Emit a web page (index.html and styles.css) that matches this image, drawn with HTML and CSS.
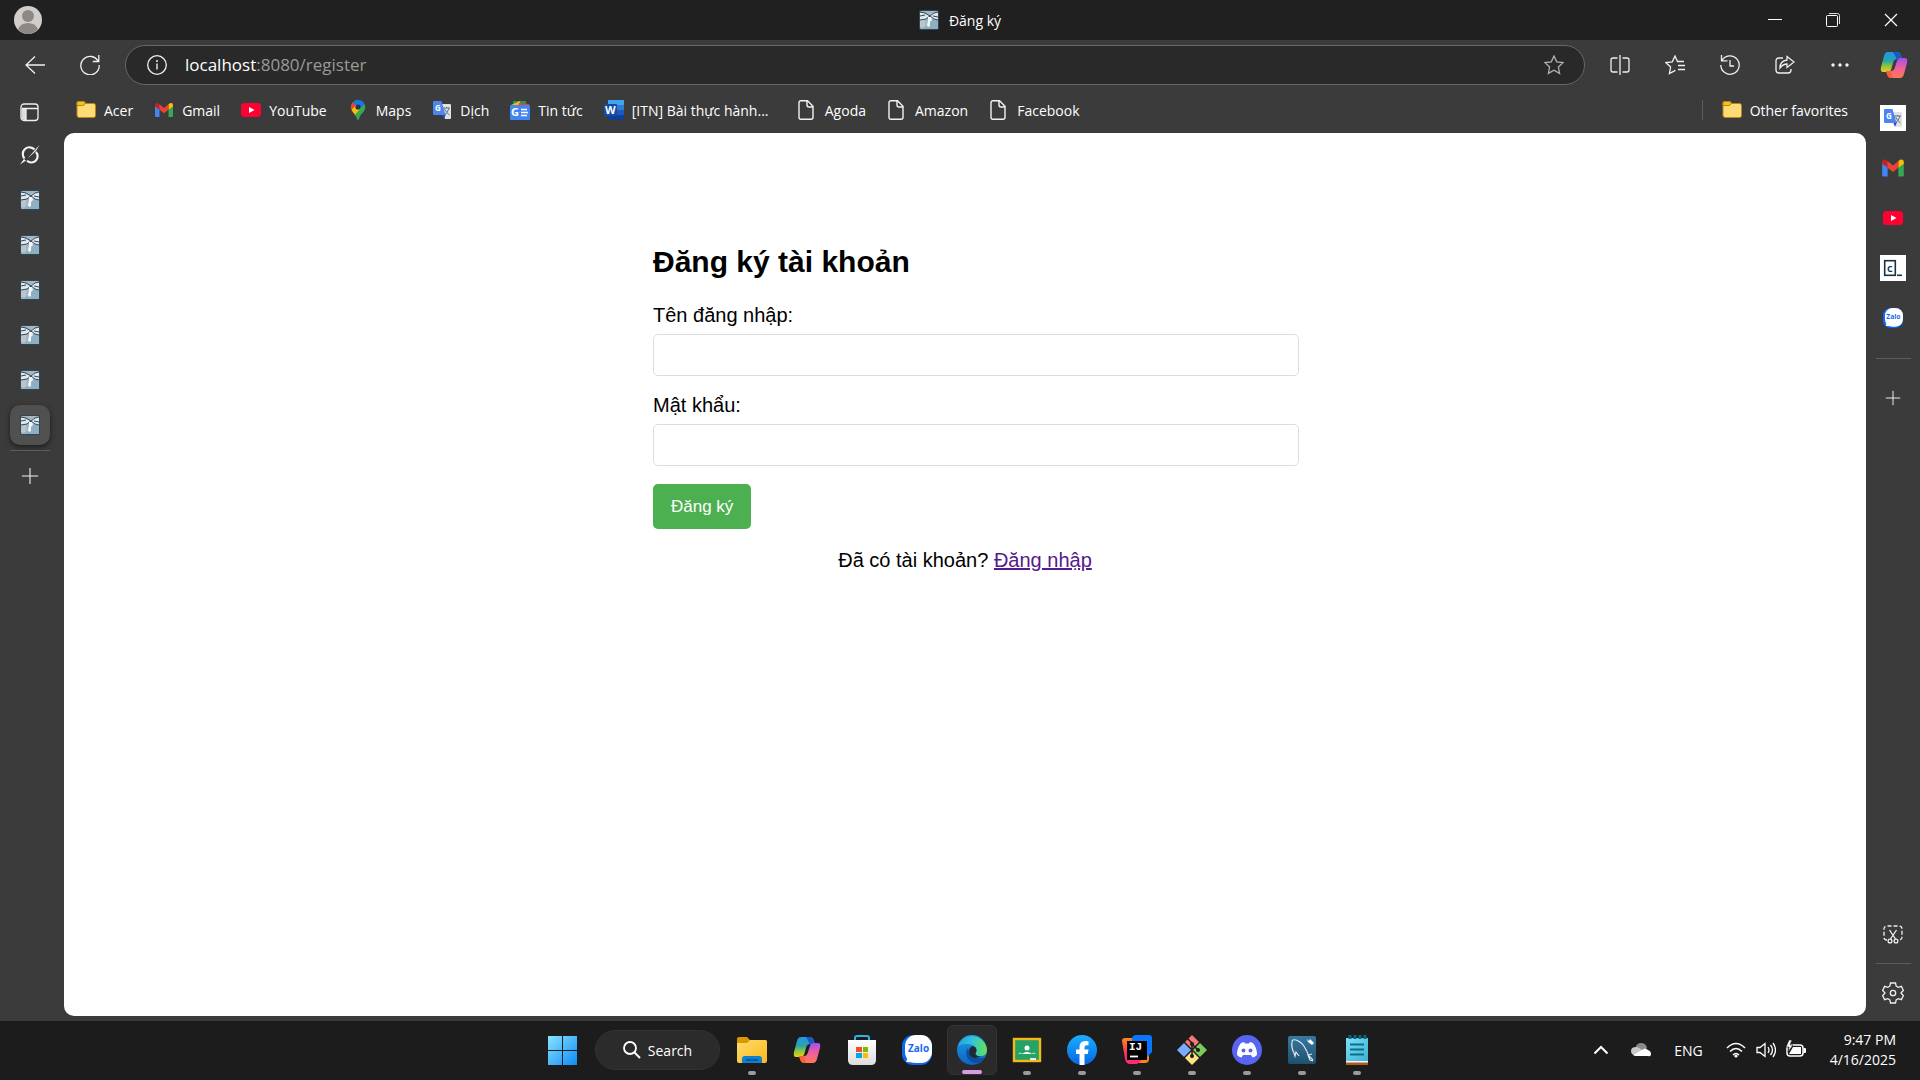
FILE: index.html
```html
<!DOCTYPE html>
<html lang="vi">
<head>
<meta charset="utf-8">
<title>Đăng ký</title>
<link rel="stylesheet" href="styles.css">
</head>
<body>
<svg class="defs" aria-hidden="true">
  <defs>
    <linearGradient id="cpA" x1="0" y1="0" x2="0" y2="1"><stop offset="0" stop-color="#2196e8"/><stop offset=".45" stop-color="#2aa5a8"/><stop offset=".7" stop-color="#8cc63c"/><stop offset="1" stop-color="#f5c917"/></linearGradient>
    <linearGradient id="cpB" x1="0" y1="0" x2="0" y2="1"><stop offset="0" stop-color="#a14ff0"/><stop offset=".5" stop-color="#ef5f9c"/><stop offset="1" stop-color="#ff7a4d"/></linearGradient>
    <linearGradient id="win" x1="0" y1="0" x2="1" y2="1"><stop offset="0" stop-color="#8be3ff"/><stop offset="1" stop-color="#0a8cf5"/></linearGradient>
    <linearGradient id="fold" x1="0" y1="0" x2="1" y2="1"><stop offset="0" stop-color="#ffdc6b"/><stop offset="1" stop-color="#fbb81c"/></linearGradient>
    <linearGradient id="edgeTop" x1="0" y1="0" x2="1" y2="0"><stop offset="0" stop-color="#24a4dc"/><stop offset=".5" stop-color="#33c3d8"/><stop offset="1" stop-color="#67e24e"/></linearGradient>
    <linearGradient id="edgeLow" x1="0" y1="0" x2="0" y2="1"><stop offset="0" stop-color="#1b9de2"/><stop offset="1" stop-color="#0b63c5"/></linearGradient>
    <linearGradient id="fbk" x1="0" y1="0" x2="0" y2="1"><stop offset="0" stop-color="#1aafff"/><stop offset="1" stop-color="#0866e0"/></linearGradient>
    <linearGradient id="ijA" x1="0" y1="0" x2="0" y2="1"><stop offset="0" stop-color="#ff8a1c"/><stop offset=".6" stop-color="#ff2a5c"/><stop offset="1" stop-color="#ff2a7a"/></linearGradient>
    <linearGradient id="sqlg" x1="0" y1="0" x2="0" y2="1"><stop offset="0" stop-color="#39799f"/><stop offset="1" stop-color="#1f5070"/></linearGradient>
    <linearGradient id="note" x1="0" y1="0" x2="1" y2="1"><stop offset="0" stop-color="#7fe0f8"/><stop offset="1" stop-color="#3bb0d2"/></linearGradient>
    <linearGradient id="bag" x1="0" y1="0" x2="0" y2="1"><stop offset="0" stop-color="#fff"/><stop offset="1" stop-color="#dcdcdc"/></linearGradient>
  </defs>
  <symbol id="favicon" viewBox="0 0 20 20">
    <rect width="20" height="20" rx="2" fill="#2f4656"/><rect x="1" y="1" width="18" height="18" rx="1" fill="#a3b8c4"/>
    <path d="M11 9h8v10H5v-3h6z" fill="#8fb0c2"/><path d="M1 10h5v7H1z" fill="#bcc4cc"/>
    <path d="M1 3l4 0 5 3-3 3-6 1zM19 2l-5 1-4 3 4 3 5 1z" fill="#dfe8ef"/>
    <path d="M1 2l5 1 5 3 4-3 4-1M1 6l5-1M1 10l6-1 4-3 4 3 4 1M14 6l5 1" fill="none" stroke="#364753"/>
    <path d="M9 7h3l1 3-2 2v4l-2 1-1-2 1-4z" fill="#f2f7fb"/>
  </symbol>
  <symbol id="folder" viewBox="0 0 20 20">
    <path d="M1 3q0-1.500 1.500-1.500h5q1.500 0 2 2h8q2 0 2 2v10q0 2-2 2h-14q-2.500 0-2.500-2z" fill="#ffdb78" stroke="#b58713" /><path d="M1 5V3q0-1.500 1.500-1.500h5q1.500 0 1.500 2-1 2-2 2H1" fill="#f6c21c" stroke="#b58713"/>
  </symbol>
  <symbol id="gmail" viewBox="0 0 20 20">
    <path d="M1 5h4.500v12H2q-1 0-1-1z" fill="#4285f4"/><path d="M14.500 5H19v11q0 1-1 1h-3.500z" fill="#34a853"/><path d="M1 5q0-2 2-2 1 0 2.500 1.200v5.500L1 6.500z" fill="#c5221f"/><path d="M19 5q0-2-2-2-1 0-2.500 1.200v5.500L19 6.500z" fill="#fbbc04"/><path d="M5.500 4.200L10 8l4.500-3.800v5.500L10 13.300 5.500 9.700z" fill="#ea4335"/>
  </symbol>
  <symbol id="youtube" viewBox="0 0 20 20"><rect y="3" width="20" height="14" rx="3.500" fill="#ff0033"/><path d="M8 7l5.500 3L8 13z" fill="#fff"/></symbol>
  <symbol id="maps" viewBox="0 0 20 20">
    <path d="M10 0a7 7 0 0 1 7 7c0 5-4.500 6-6 12q-1 2-2 0C8 13 3 12 3 7a7 7 0 0 1 7-7z" fill="#34a853"/><path d="M10 0a7 7 0 0 1 6.500 4.500L10 10 4.500 3A7 7 0 0 1 10 0z" fill="#1a73e8"/><path d="M4.800 2.500L8 5.500 3.500 10Q1.500 6 4.800 2.500z" fill="#ea4335"/><path d="M3.500 10L8 5l5 3-6 7q-2-3-3.500-5z" fill="#fbbc04"/><path d="M16.500 4.500q2 4-2 8L8 17l-1-2z" fill="#34a853"/><circle cx="10" cy="7" r="2.600" fill="#2b3350"/>
  </symbol>
  <symbol id="page" viewBox="0 0 20 20"><path d="M4 .8h6.500l5.500 5.500v11q0 2-2 2H4q-2 0-2-2v-14.500q0-2 2-2zM10 1v4q0 2 2 2h4" fill="none" stroke="#f2f2f2" stroke-width="1.400"/></symbol>
  <symbol id="copilot" viewBox="0 0 28 28">
    <path d="M8 1h9q3 0 4 4l1 3h-5q-3 0-4 4l-2 7q-1 2-4 2H3q-3 0-2-5L4 5q1-4 4-4z" fill="url(#cpA)"/><path d="M16 1q4 0 5 4l1 4h-5q-2-5-4-8z" fill="#1b58c9"/><path d="M20 27h-9q-3 0-4-4l-1-3h5q3 0 4-4l2-6q1-3 4-3h4q3 0 2 5l-3 11q-1 4-4 4z" fill="url(#cpB)"/><path d="M12 27q-4 0-5-4l-1-3h5q1 6 3 7z" fill="#f5613a"/>
  </symbol>
  <symbol id="plus" viewBox="0 0 20 20"><path d="M10 1v18M1 10h18" stroke="#f2f2f2" stroke-width="1.200"/></symbol>
</svg>

<div class="desktop">
  <header class="titlebar">
    <button class="avatar" aria-label="Profile"><svg viewBox="0 0 28 28"><circle cx="14" cy="14" r="14" fill="#d0cdca"/><circle cx="14" cy="10" r="6" fill="#8c8885"/><path d="M4 23q3-6 10-6t10 6q-4 5-10 5T4 23z" fill="#8c8885"/></svg></button>
    <div class="tab-title"><svg class="i20"><use href="#favicon"/></svg><span>Đăng ký</span></div>
    <div class="window-buttons">
      <button aria-label="Minimize"><svg viewBox="0 0 14 14"><path d="M0 6.500h14" stroke="#fff"/></svg></button>
      <button aria-label="Restore"><svg viewBox="0 0 14 14"><rect x=".5" y="2.500" width="11" height="11" rx="1" fill="none" stroke="#fff"/><path d="M3 .5h8.500q2 0 2 2V11" fill="none" stroke="#ddd"/></svg></button>
      <button aria-label="Close"><svg viewBox="0 0 14 14"><path d="M1 1l12 12M13 1L1 13" stroke="#fff" stroke-width="1.200"/></svg></button>
    </div>
  </header>

  <div class="toolbar">
    <div class="nav">
      <button aria-label="Back"><svg viewBox="0 0 20 20"><path d="M10 1.500L1 10l9 8.500M1 10h19" class="line"/></svg></button>
      <button aria-label="Refresh"><svg viewBox="0 0 20 20"><path d="M18.500 7A9.200 9.200 0 1 0 19.200 10M18.800 0v6.500h-6" class="line"/></svg></button>
    </div>
    <div class="address">
      <svg class="i20" viewBox="0 0 20 20"><circle cx="10" cy="10" r="9.300" class="line"/><path d="M10 8.500v6" stroke="#eee" stroke-width="1.400"/><circle cx="10" cy="6" r="1" fill="#eee"/></svg>
      <div class="url"><b>localhost</b>:8080/register</div>
      <button aria-label="Add to favorites"><svg viewBox="0 0 20 20"><path d="M10 1l2.700 5.800 6.300.8-4.600 4.400 1.200 6.400L10 15.200l-5.600 3.200L5.600 12 1 7.600l6.300-.8z" class="line dim"/></svg></button>
    </div>
    <div class="tools">
      <button aria-label="Split screen"><svg viewBox="0 0 20 20"><path d="M7.500 3H3Q1 3 1 5v10q0 2 2 2h4.500M12.500 3H17q2 0 2 2v10q0 2-2 2h-4.500M10 0v20" class="line"/></svg></button>
      <button aria-label="Favorites"><svg viewBox="0 0 20 20"><path d="M19 6.500h-6.500L10 1 7.300 6.800.8 7.600 5.600 12l-1.200 6.600 6-3.200M13 10.500h7M13 14.500h7" class="line"/></svg></button>
      <button aria-label="History"><svg viewBox="0 0 20 20"><path d="M2 5.500A9.200 9.200 0 1 1 .8 10M1.500 0v5.800h6M10 5v6h4" class="line"/></svg></button>
      <button aria-label="Share"><svg viewBox="0 0 20 20"><path d="M8 3H4Q1 3 1 6v9q0 3 3 3h9q3 0 3-3v-1M12 1.500L19 7l-7 5.500V9Q8 9 5 13q0-7 7-8z" class="line"/></svg></button>
      <button aria-label="Settings and more"><svg viewBox="0 0 20 20" fill="#f2f2f2"><circle cx="3" cy="10" r="1.700"/><circle cx="10" cy="10" r="1.700"/><circle cx="17" cy="10" r="1.700"/></svg></button>
      <button class="assistant" aria-label="Copilot"><svg class="i28"><use href="#copilot"/></svg></button>
    </div>
  </div>

  <div class="browser">
    <nav class="tabs">
      <button class="tab-menu" aria-label="Tab actions"><svg class="i20" viewBox="0 0 20 20"><rect x="1" y="2" width="17" height="16.500" rx="3" class="line"/><path d="M1.500 7H6v11H4q-2.500 0-2.500-2z" fill="#ddd"/><path d="M6 7v11M2 6.500h16" class="line"/></svg></button>
      <button aria-label="Grok"><svg class="i20" viewBox="0 0 20 20"><path d="M14.500 4.500A6.300 6.300 0 0 0 4.500 13.500M7 15.800A6.300 6.300 0 0 0 16 7" fill="none" stroke="#f4f4f4" stroke-width="2.200"/><path d="M0 19.500L4 14l2 1.500zM19.500 0L16 6 7.500 13.500z" fill="#f4f4f4"/></svg></button>
      <button aria-label="Tab"><svg class="i20"><use href="#favicon"/></svg></button>
      <button aria-label="Tab"><svg class="i20"><use href="#favicon"/></svg></button>
      <button aria-label="Tab"><svg class="i20"><use href="#favicon"/></svg></button>
      <button aria-label="Tab"><svg class="i20"><use href="#favicon"/></svg></button>
      <button aria-label="Tab"><svg class="i20"><use href="#favicon"/></svg></button>
      <button class="active" aria-label="Đăng ký"><svg class="i20"><use href="#favicon"/></svg></button>
      <hr>
      <button aria-label="New tab"><svg class="i18"><use href="#plus"/></svg></button>
    </nav>

    <div class="content">
      <nav class="bookmarks">
        <a href="#"><svg class="i20"><use href="#folder"/></svg>Acer</a>
        <a href="#"><svg class="i20"><use href="#gmail"/></svg>Gmail</a>
        <a href="#"><svg class="i20"><use href="#youtube"/></svg>YouTube</a>
        <a href="#"><svg class="i20"><use href="#maps"/></svg>Maps</a>
        <a href="#"><svg class="i20" viewBox="0 0 20 20"><path d="M9 4h9q1 0 1 1v13q0 1-1 1h-5z" fill="#dfe3e6"/><path d="M11 8h7M14.500 7v1M17 8q-1 5-5 7M12.500 9q2 4 5 6" stroke="#61717b" fill="none"/><path d="M10 14h4l-2 5z" fill="#3b3fc4"/><path d="M2 1h7.500l4 14H2q-1 0-1-1V2q0-1 1-1z" fill="#4a86f0"/><text x="3" y="11" class="g" font-size="8" fill="#fff">G</text></svg>Dịch</a>
        <a href="#"><svg class="i20" viewBox="0 0 20 20"><path d="M3 1h13v6H3z" fill="#1e9b4c"/><path d="M1 5l9-4v6H1z" fill="#fbbc04"/><path d="M9 3l10 1v3H8z" fill="#ea4335"/><rect y="5" width="20" height="15" rx="1" fill="#4285f4"/><text x="1" y="16" class="g" font-size="11" fill="#fff">G</text><path d="M11 9.500h6M11 12.500h7M11 15.500h6" stroke="#fff" stroke-width="1.500"/></svg>Tin tức</a>
        <a href="#" class="wide"><svg class="i20" viewBox="0 0 20 20"><path d="M4 0h16v5H4z" fill="#41a5ee"/><path d="M4 5h16v5H4z" fill="#2b7cd3"/><path d="M4 10h16v5H4z" fill="#185abd"/><path d="M4 15h16v5H4z" fill="#103f91"/><rect y="4" width="13" height="12" rx="1" fill="#134ca6"/><text x="1" y="14" class="g" font-size="11" fill="#fff">W</text></svg>[ITN] Bài thực hành...</a>
        <a href="#"><svg class="i20"><use href="#page"/></svg>Agoda</a>
        <a href="#"><svg class="i20"><use href="#page"/></svg>Amazon</a>
        <a href="#"><svg class="i20"><use href="#page"/></svg>Facebook</a>
        <a href="#" class="other"><svg class="i20"><use href="#folder"/></svg>Other favorites</a>
      </nav>
      <main class="page">
        <div class="container">
          <h2>Đăng ký tài khoản</h2>
          <form>
            <div class="form-group"><label for="username">Tên đăng nhập:</label><input type="text" id="username"></div>
            <div class="form-group"><label for="password">Mật khẩu:</label><input type="password" id="password"></div>
            <button type="submit" class="submit">Đăng ký</button>
          </form>
          <p>Đã có tài khoản? <a href="#">Đăng nhập</a></p>
        </div>
      </main>
    </div>

    <aside class="sidebar">
      <button class="tile" aria-label="Translate"><svg class="i20" viewBox="0 0 20 20"><path d="M9 4h9q1 0 1 1v13q0 1-1 1h-5z" fill="#dfe3e6"/><path d="M11 8h7M14.500 7v1M17 8q-1 5-5 7M12.500 9q2 4 5 6" stroke="#61717b" fill="none"/><path d="M10 14h4l-2 5z" fill="#3b3fc4"/><path d="M2 1h7.500l4 14H2q-1 0-1-1V2q0-1 1-1z" fill="#4a86f0"/><text x="3" y="11" class="g" font-size="8" fill="#fff">G</text></svg></button>
      <button aria-label="Gmail"><svg class="i24"><use href="#gmail"/></svg></button>
      <button aria-label="YouTube"><svg class="i20"><use href="#youtube"/></svg></button>
      <button class="tile" aria-label="Codecademy"><svg class="i26" viewBox="0 0 26 26"><rect x="4.700" y="5.700" width="10.600" height="14.600" fill="none" stroke="#163247" stroke-width="1.600"/><text x="7" y="17" class="g" font-size="9" fill="#163247">C</text><path d="M17 20.300h5" stroke="#163247" stroke-width="1.600"/></svg></button>
      <button aria-label="Zalo"><svg class="i20" viewBox="0 0 30 30"><rect width="30" height="30" rx="11" fill="#0a68f5"/><rect x="3" width="27" height="28" rx="11" fill="#fff"/><path d="M4 20q2 4 0 7l9 .5z" fill="#fff"/><text x="5" y="17" class="g" font-size="10" fill="#1768f2">Zalo</text></svg></button>
      <hr>
      <button aria-label="Customize"><svg class="i16"><use href="#plus"/></svg></button>
      <span class="spacer"></span>
      <button aria-label="Screenshot"><svg class="i20" viewBox="0 0 20 20"><path d="M4 16q-3 0-3-3V5q0-3 3-3h12q3 0 3 3v8q0 3-3 3" class="line" stroke-dasharray="4 2"/><path d="M6.500 6l6 9M13.500 6l-6 9" class="line"/><circle cx="7" cy="17" r="1.900" class="line"/><circle cx="13" cy="17" r="1.900" class="line"/></svg></button>
      <hr>
      <button class="settings" aria-label="Settings"><svg class="i22" viewBox="0 0 22 22"><path d="M8.500 1h5l.7 3.200 2 1.200 3.200-1 2 4-2.300 2.300v.6l2.300 2.300-2 4-3.200-1-2 1.200-.7 3.200h-5l-.7-3.200-2-1.200-3.200 1-2-4L2.900 11.300v-.6L.6 8.400l2-4 3.200 1 2-1.200z" class="line"/><circle cx="11" cy="11" r="2.700" class="line"/></svg></button>
    </aside>
  </div>

  <footer class="taskbar">
    <span></span>
    <div class="apps">
      <button aria-label="Start"><svg class="i30" viewBox="0 0 30 30"><path d="M0 1h14v14H0zM15 1h14v14H15zM0 16h14v14H0zM15 16h14v14H15z" fill="url(#win)"/></svg></button>
      <button class="search"><svg class="i18" viewBox="0 0 18 18"><circle cx="7" cy="7" r="6" fill="none" stroke="#fff" stroke-width="1.800"/><path d="M11.500 11.500L17 17" stroke="#fff" stroke-width="2"/></svg>Search</button>
      <button class="run" aria-label="File Explorer"><svg class="i30" viewBox="0 0 30 30"><path d="M0 8V4q0-2 2-2h8l3 3h15q2 0 2 2v4z" fill="#d99a00"/><path d="M0 8h10l3-3h15q2 0 2 2v19q0 2-2 2H2q-2 0-2-2z" fill="url(#fold)"/><path d="M5 28v-4q0-3 3-3h14q3 0 3 3v4z" fill="#0f7fd0"/><path d="M9 25h12" stroke="#0a4f90" stroke-width="1.500"/></svg></button>
      <button aria-label="Copilot"><svg class="i28"><use href="#copilot"/></svg></button>
      <button aria-label="Microsoft Store"><svg class="i30" viewBox="0 0 30 30"><path d="M8 6V3q0-2 2-2h10q2 0 2 2v3" fill="none" stroke="#2bb3e8" stroke-width="2"/><path d="M1 5h28v20q0 5-5 5H6q-5 0-5-5z" fill="url(#bag)"/><path d="M9 12h6v5H9z" fill="#f25022"/><path d="M16 12h5v5h-5z" fill="#7fba00"/><path d="M9 18h6v5H9z" fill="#00a4ef"/><path d="M16 18h5v5h-5z" fill="#ffb900"/></svg></button>
      <button aria-label="Zalo"><svg class="i30" viewBox="0 0 30 30"><rect width="30" height="30" rx="11" fill="#0a68f5"/><rect x="3" width="27" height="28" rx="11" fill="#fff"/><path d="M4 20q2 4 0 7l9 .5z" fill="#fff"/><text x="6" y="17" class="g" font-size="10" fill="#1768f2">Zalo</text></svg></button>
      <button class="run current" aria-label="Microsoft Edge"><svg class="i30" viewBox="0 0 30 30"><circle cx="15" cy="15" r="15" fill="url(#edgeLow)"/><path d="M1 11A15 15 0 0 1 30 15q0 6-7 6-5 0-5-2 2-2 1-5-2-5-9-5-6 0-9 2z" fill="url(#edgeTop)"/><path d="M11 13q-3 3-1 9 3 6 10 6 5-1 8-6-4 2-9 1-7-2-8-10z" fill="#0c4f9c"/><path d="M12 17q0-5 4-6 4 1 3.500 5-1 2-1 3 1 2 5 2.500Q18 24 15 22q-3-2-3-5z" fill="#202a30"/></svg></button>
      <button class="run" aria-label="Classroom"><svg class="i30" viewBox="0 0 30 30"><rect x="2" y="4" width="26" height="22" fill="#25a265" stroke="#f5b818" stroke-width="2.400"/><circle cx="15" cy="13" r="2.500" fill="#fff"/><path d="M10 19q5-4 10 0z" fill="#fff"/><path d="M6 19q2-3 5 0zM19 19q3-3 5 0z" fill="#a5dcc0"/><path d="M18 24h6" stroke="#eee" stroke-width="2"/></svg></button>
      <button class="run" aria-label="Facebook"><svg class="i30" viewBox="0 0 30 30"><circle cx="15" cy="15" r="15" fill="url(#fbk)"/><path d="M12.500 30V19H9v-4.500h3.500V12q0-6 6-6 2 0 3 .3v4h-2q-2 0-2 2v2.200h4L20.800 19h-3.300v11z" fill="#fff"/></svg></button>
      <button class="run" aria-label="IntelliJ IDEA"><svg class="i30" viewBox="0 0 30 30"><path d="M15 14h12v10q0 4-4 4h-6z" fill="#ff8418"/><path d="M0 6q0-3 3-3h7l9 20v3l-4 3H8q-4 0-5-5z" fill="url(#ijA)"/><path d="M10 3q1-3 4-3h13q3 0 3 3v14l-6 6H10z" fill="#0a76ff"/><path d="M5 6h20v19H5z" fill="#000"/><text x="7" y="15" class="mono" font-size="11" fill="#fff">IJ</text><path d="M8 21.500h8" stroke="#fff" stroke-width="1.800"/></svg></button>
      <button class="run" aria-label="Git"><svg class="i30" viewBox="0 0 30 30"><path d="M15 0l7 7-7 7-7-7z" fill="#f77777"/><path d="M7 8l7 7-7 7-7-7z" fill="#7aabff"/><path d="M23 8l7 7-7 7-7-7z" fill="#7fc95b"/><path d="M15 16l7 7-7 7-7-7z" fill="#ffe082"/><path d="M10 3l5 5v15M15 9l6 6" stroke="#1c1c1c" stroke-width="1.500" fill="none"/><circle cx="15" cy="9" r="2" fill="#1c1c1c"/><circle cx="21" cy="15" r="2" fill="#1c1c1c"/><circle cx="15" cy="21" r="2" fill="#1c1c1c"/></svg></button>
      <button class="run" aria-label="Discord"><svg class="i30" viewBox="0 0 30 30"><circle cx="15" cy="15" r="15" fill="#5865f2"/><path d="M9 8l3-1 1 1.500h4L18 7l3 1q4 5 4 12-2 2-4.500 2.500L19 20h-8l-1.500 2.500Q7 22 5 20 5 13 9 8z" fill="#fff"/><circle cx="11.500" cy="15.500" r="2" fill="#5865f2"/><circle cx="18.500" cy="15.500" r="2" fill="#5865f2"/></svg></button>
      <button class="run" aria-label="MySQL Workbench"><svg class="i30" viewBox="0 0 30 30"><rect x="1" y="1" width="28" height="28" rx="2" fill="url(#sqlg)"/><path d="M7 18Q4 12 5 7q0-3 4-2 6 2 9 8 3 5 3 7l5 5M7 18l1 3 1-4 3 4M21 20l4-1M21 20l2 5 3 1" fill="none" stroke="#dceaf2" stroke-width="1.200"/><path d="M20 4l2 2 1-2 4 4-2 2-4-3z" fill="#fff"/></svg></button>
      <button class="run" aria-label="Notepad"><svg class="i30" viewBox="0 0 30 30"><path d="M4 25h22v5H4z" fill="#b4581c"/><path d="M4 3h22v23H4z" fill="url(#note)"/><path d="M4 26h22v1.500H4z" fill="#f4f4f4"/><path d="M8 9.500h14M8 14.500h14M8 19.500h14" stroke="#0b6e8c" stroke-width="2"/><path d="M8 0v4M13 0v4M18 0v4M23 0v4" stroke="#0b6580" stroke-width="3"/></svg></button>
    </div>
    <div class="tray">
      <button aria-label="Show hidden icons"><svg class="i16" viewBox="0 0 16 16"><path d="M1.500 11.500L8 5l6.500 6.500" fill="none" stroke="#fff" stroke-width="2"/></svg></button>
      <button class="cloud" aria-label="OneDrive"><svg class="i20" viewBox="0 0 20 20"><path d="M4 12q0-9 6-9 5 0 6 5l-7 5z" fill="#8a8a8a"/><path d="M3 15q-3-1-3-4 0-4 5-4 3 0 6 3l4 5z" fill="#c9c9c9"/><path d="M2 15l9-5q3-3 6 0 3 1 3 4t-3 2H4z" fill="#fff"/></svg></button>
      <span class="lang">ENG</span>
      <button class="status" aria-label="Network, volume, battery">
        <svg class="i20" viewBox="0 0 20 20"><path d="M1 8q9-9 18 0M4 11.500q6-6 12 0M7 15q3-3 6 0" fill="none" stroke="#fff" stroke-width="1.600"/><circle cx="10" cy="16" r="1.600" fill="#fff"/></svg>
        <svg class="i20" viewBox="0 0 20 20"><path d="M1 7.500h3L9 3.500v13l-5-4H1zM12 7q2 3 0 6M14.500 5q4 5 0 10M17 3q5 7 0 14" fill="none" stroke="#fff" stroke-width="1.300"/></svg>
        <svg class="i20" viewBox="0 0 20 20"><rect x="1" y="5" width="16" height="11" rx="3" fill="none" stroke="#fff" stroke-width="1.500"/><path d="M3 14l4-7h8v7zM17.500 8H19q1 0 1 1v3q0 1-1 1h-1.500z" fill="#fff"/><path d="M3 0L0 7h3l-1 5 5-7H4l2-5z" fill="#fff" stroke="#1c1c1c" stroke-width=".6"/></svg>
      </button>
      <div class="clock"><span>9:47 PM</span><span>4/16/2025</span></div>
    </div>
  </footer>
</div>
</body>
</html>
```

FILE: styles.css
```css
* { box-sizing: border-box; }
body { margin: 0; font-family: "Open Sans", "Noto Sans", sans-serif; font-size: 14px; color: #fff; }
button { background: none; border: 0; padding: 0; color: inherit; font: inherit; display: flex; align-items: center; justify-content: center; }
svg { display: block; flex: none; }
hr { border: 0; margin: 0; height: 1px; background: #5c5c5c; }
.defs { position: absolute; width: 0; height: 0; }
.line { fill: none; stroke: #f0f0f0; stroke-width: 1.3px; }
.dim { stroke: #b0b0b0; }
.g { font-family: "Open Sans", sans-serif; font-weight: 700; }
.mono { font-family: "Liberation Mono", monospace; font-weight: 700; }
.i16 { width: 16px; height: 16px; }
.i18 { width: 18px; height: 18px; }
.i20 { width: 20px; height: 20px; }
.i22 { width: 22px; height: 22px; }
.i24 { width: 24px; height: 24px; }
.i26 { width: 26px; height: 26px; }
.i28 { width: 28px; height: 28px; }
.i30 { width: 30px; height: 30px; }

.desktop { min-height: 100vh; display: flex; flex-direction: column; background: #3b3b3b; }

.titlebar { height: 40px; display: grid; grid-template-columns: 1fr auto 1fr; align-items: center; background: #202020; }
.avatar { width: 28px; height: 28px; margin-left: 14px; }
.avatar svg { width: 28px; height: 28px; }
.tab-title { display: flex; align-items: center; gap: 10px; }
.window-buttons { display: flex; justify-content: flex-end; }
.window-buttons button { width: 58px; height: 38px; }
.window-buttons svg { width: 14px; height: 14px; }

.toolbar { height: 50px; display: flex; align-items: center; }
.toolbar button svg:not(.i28) { width: 20px; height: 20px; }
.nav { display: flex; padding: 0 8px 0 7px; }
.nav button { width: 55px; height: 40px; }
.address { flex: 1; height: 40px; display: flex; align-items: center; gap: 18px; padding: 0 20px 0 21px; background: #292929; border: 1px solid #686868; border-radius: 20px; }
.url { flex: 1; font-size: 17px; line-height: 24px; color: #9a9a9a; }
.url b { font-weight: 400; color: #fff; }
.tools { display: flex; padding-left: 7px; }
.tools button { width: 55px; height: 40px; }
.tools .assistant { width: 53px; }

.browser { flex: 1; display: grid; grid-template-columns: 64px 1fr 54px; }
.tabs { display: flex; flex-direction: column; gap: 5px; padding: 4px 14px 0 10px; }
.tabs button { width: 40px; height: 40px; border-radius: 10px; }
.tabs .tab-menu { height: 36px; }
.tabs .active { background: #505050; box-shadow: 0 2px 5px #1c1c1c; }
.tabs hr { width: 40px; }
.content { display: flex; flex-direction: column; padding-bottom: 5px; }
.bookmarks { height: 43px; display: flex; align-items: center; gap: 21px; padding: 0 18px 3px 12px; white-space: nowrap; }
.bookmarks a { display: flex; align-items: center; gap: 8px; color: #fff; text-decoration: none; }
.bookmarks .wide { min-width: 172px; }
.bookmarks .other { margin-left: auto; padding-left: 19px; border-left: 1px solid #5c5c5c; }
.page { flex: 1; padding-top: 112px; background: #fff; border-radius: 10px; color: #000; font-family: "Liberation Sans", Arial, sans-serif; font-size: 20px; line-height: 23px; }
.container { max-width: 624px; margin: 0 auto; }
.container h2 { margin: 0 0 25px; font-size: 30px; line-height: 34px; }
.form-group { margin-bottom: 18px; }
.form-group label { display: block; margin-bottom: 7px; }
.form-group input { display: block; box-sizing: content-box; width: 100%; height: 20px; padding: 10px; border: 1px solid #ddd; border-radius: 5px; font-size: 17px; }
.submit { height: 45px; padding: 0 18px; background: #4caf50; color: #fff; border-radius: 5px; font-size: 17px; }
.container p { margin: 20px 0 0; text-align: center; }
.container p a { color: #551a8b; }

.sidebar { display: flex; flex-direction: column; align-items: center; padding: 8px 0; }
.sidebar button { width: 40px; height: 40px; margin-bottom: 10px; }
.sidebar .tile { width: 26px; height: 26px; margin: 7px 0 17px; background: #fff; }
.sidebar hr { width: 35px; margin: 10px 0 19px; }
.sidebar .spacer { flex: 1; }
.sidebar .spacer ~ hr { margin: 0 0 9px; }
.sidebar .spacer ~ button { margin-bottom: 9px; }
.sidebar .settings.settings { margin: 0; }

.taskbar { height: 59px; display: grid; grid-template-columns: 1fr auto 1fr; align-items: center; padding-bottom: 1px; background: #1c1c1c; }
.apps { display: flex; gap: 5px; }
.apps button { position: relative; width: 50px; height: 50px; border-radius: 6px; }
.apps .search { width: 125px; height: 40px; margin: 5px 2px; gap: 7px; background: #2b2b2b; border: 1px solid #323232; border-radius: 20px; }
.apps .current { background: #2a2a2a; border: 1px solid #333; }
.run::after { content: ""; position: absolute; left: 50%; bottom: 0; width: 8px; height: 4px; margin-left: -4px; border-radius: 2px; background: #9a9a9a; }
.current::after { width: 20px; margin-left: -10px; background: #d99be3; }
.tray { display: flex; align-items: center; justify-content: flex-end; padding-right: 24px; }
.cloud { margin-left: 22px; }
.lang { margin: 0 23px 0 23px; }
.status { gap: 10px; }
.clock { display: flex; flex-direction: column; align-items: flex-end; margin-left: 24px; line-height: 20px; }
```
